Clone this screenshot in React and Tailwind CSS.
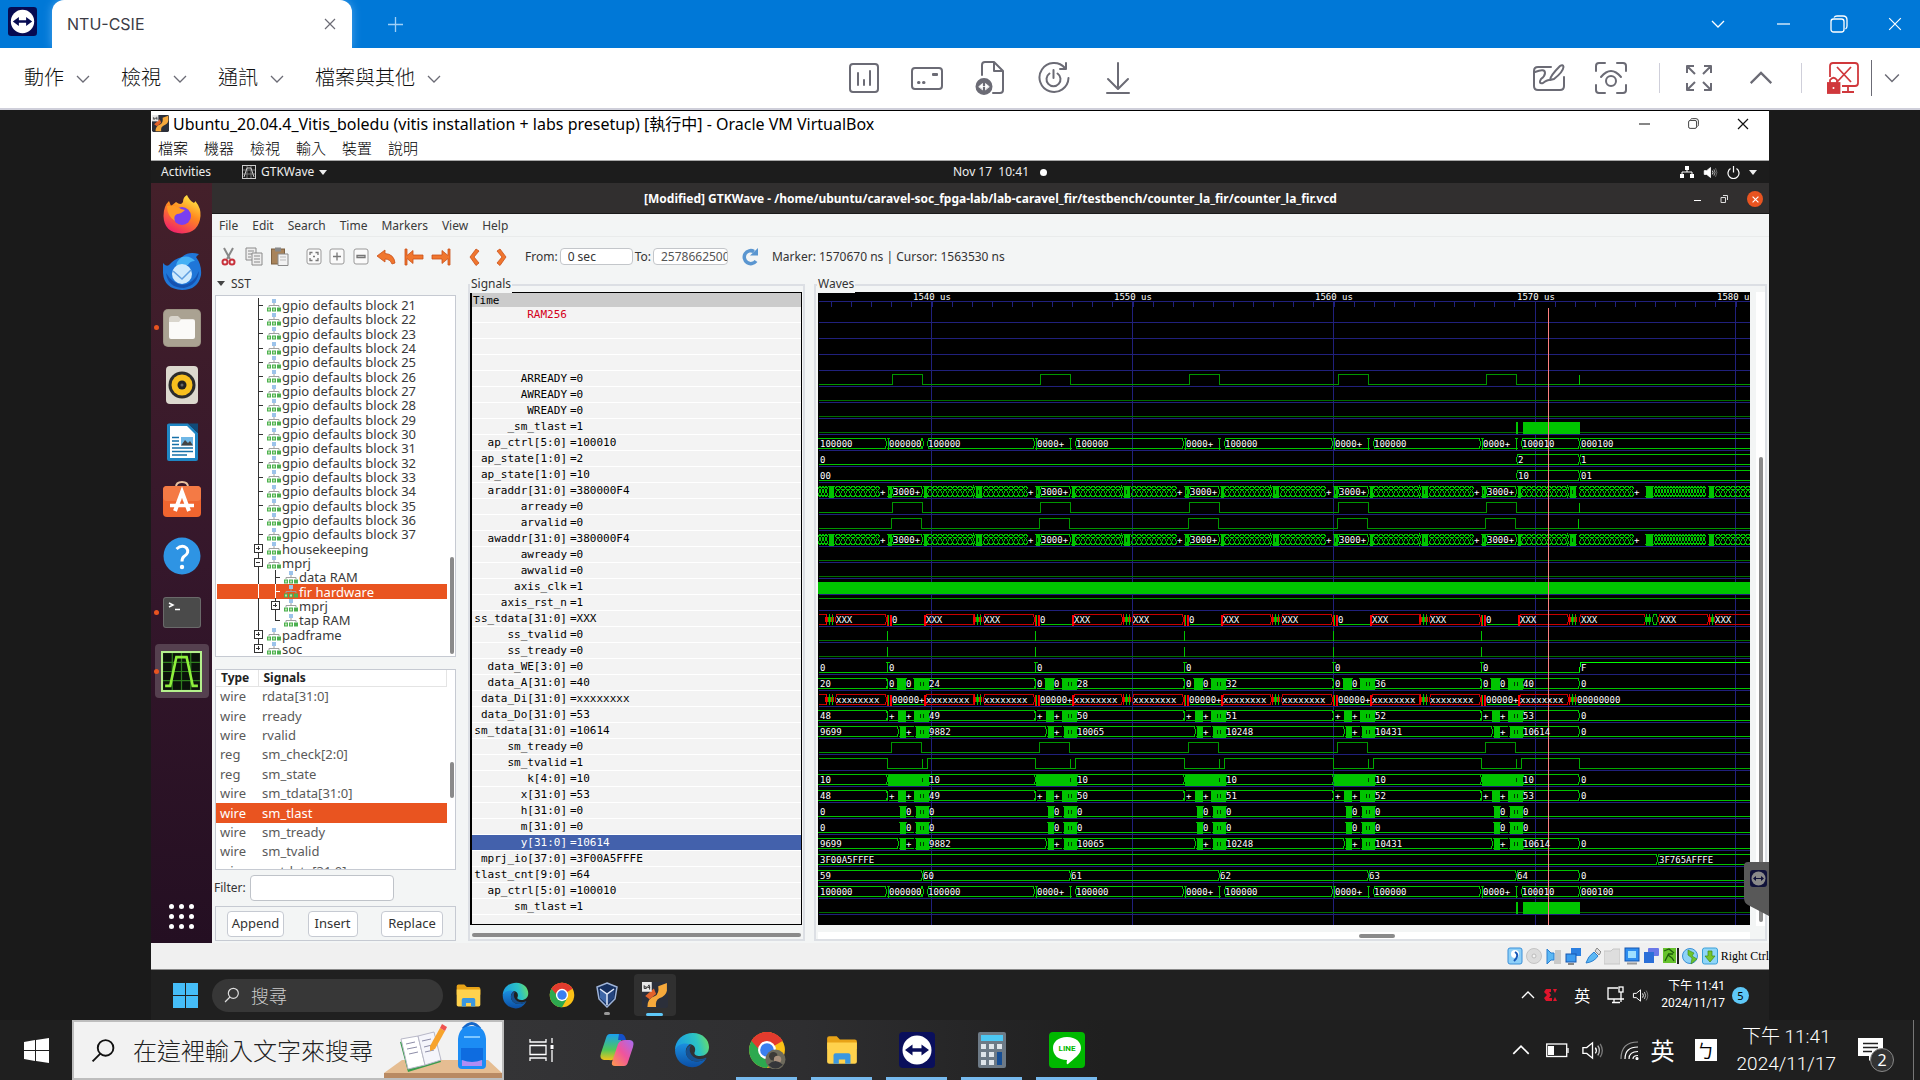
import React from "react";

const UI = "font-['Noto_Sans','Noto_Sans_CJK_TC',sans-serif]";

/* ---------- small shared glyphs ---------- */
const Chev = ({ up, c = "#6b6b75", w = 14 }) => (
  <svg width={w} height={w} viewBox="0 0 14 14" fill="none" stroke={c} strokeWidth="1.3">
    <path d={up ? "M1 10 L7 4 L13 10" : "M1 4 L7 10 L13 4"} />
  </svg>
);
const Cross = ({ c = "#6b6b75", w = 12, s = 1.2 }) => (
  <svg width={w} height={w} viewBox="0 0 12 12" fill="none" stroke={c} strokeWidth={s}>
    <path d="M1 1 L11 11 M11 1 L1 11" />
  </svg>
);
const Dash = ({ c = "#fff", w = 13 }) => (
  <svg width={w} height="12" viewBox="0 0 13 12" stroke={c} strokeWidth="1.2"><path d="M0 6 H13" /></svg>
);
const Restore = ({ c = "#fff", w = 18 }) => (
  <svg width={w} height={w} viewBox="0 0 18 18" fill="none" stroke={c} strokeWidth="1.3">
    <rect x="1" y="4" width="13" height="13" rx="2.5" />
    <path d="M4 2.5 Q5 1 7 1 H13 Q17 1 17 5 V11 Q17 13 15.5 14" />
  </svg>
);
const TeamViewer = ({ w, bg = "#0a0f5c", fg = "#fff" }) => (
  <svg width={w} height={w} viewBox="0 0 36 36">
    <rect width="36" height="36" rx="4" fill={bg} />
    <circle cx="18" cy="18" r="14.5" fill={fg} />
    <path d="M6 18 L13.5 12.5 V16.3 H22.5 V12.5 L30 18 L22.5 23.5 V19.7 H13.5 V23.5 Z" fill={bg} />
  </svg>
);
const Folder = ({ w }) => (
  <svg width={w} height={w} viewBox="0 0 32 32">
    <path d="M2 5 Q2 3 4 3 H11 L14 6 H28 Q30 6 30 8 V15 H2 Z" fill="#e8a317" />
    <path d="M2 9 H30 V27 Q30 29 28 29 H4 Q2 29 2 27 Z" fill="#ffd24d" />
    <path d="M8 29 V21 Q8 19 10 19 H22 Q24 19 24 21 V29 H19 V25 H13 V29 Z" fill="#3a97e0" />
  </svg>
);
const Edge = ({ w }) => (
  <svg width={w} height={w} viewBox="0 0 36 36">
    <defs>
      <linearGradient id="eg1" x1="0" x2="1" y1="0.3" y2="0.1"><stop offset="0" stopColor="#1b9de2" /><stop offset="0.6" stopColor="#2cc3c4" /><stop offset="1" stopColor="#6fdf62" /></linearGradient>
      <linearGradient id="eg2" x1="0" x2="0" y1="0" y2="1"><stop offset="0" stopColor="#1b8fe0" /><stop offset="1" stopColor="#0c4fa5" /></linearGradient>
    </defs>
    <path d="M1 18 C1 8 9 1 19 1 C29 1 35 8 35 15 C35 21 31 24 26 24 C22 24 20 22.5 20.5 20.5 C22 18 21.5 12.5 15.5 12 C9 11.5 3 15 1 18 Z" fill="url(#eg1)" />
    <path d="M1 18 C3 12 11 10 16 12.5 C12 14 11 19 12.5 23 C15 29.5 23 31.5 32 27 C28 33 23 35.5 18 35.2 C8 34.5 1 27.5 1 18 Z" fill="url(#eg2)" />
    <path d="M12.5 23 C15 29.5 23 31.5 32 27 C33 26 32 25.3 31 26 C26 28.5 19 26.5 16.5 21 C15 17.5 16 14 17.5 13 C13 13.5 11 18.5 12.5 23 Z" fill="#17508f" />
  </svg>
);
const Chrome = ({ w, avatar }) => (
  <svg width={w} height={w} viewBox="0 0 36 36">
    <circle cx="18" cy="18" r="17" fill="#fbc116" />
    <path d="M18 18 L3.3 9.5 A17 17 0 0 1 32.7 9.5 Z" fill="#e33b2e" />
    <path d="M18 18 L3.3 9.5 A17 17 0 0 0 18 35 L25.4 22 Z" fill="#2da94f" />
    <path d="M3.3 9.5 H18 V18 L10.6 22 Z" fill="#2da94f" />
    <path d="M3.3 9.5 A17 17 0 0 1 32.7 9.5 H18 L10 17 Z" fill="#e33b2e" />
    <circle cx="18" cy="18" r="8.5" fill="#fff" />
    <circle cx="18" cy="18" r="6.5" fill="#3a7ff0" />
    {avatar && (
      <g>
        <circle cx="26" cy="27" r="9.5" fill="#6d6a5c" />
        <circle cx="24" cy="24" r="4" fill="#3d3a38" />
        <circle cx="28" cy="27" r="3.5" fill="#a8907e" />
        <path d="M19 32 Q26 25 33 32 Q26 39 19 32 Z" fill="#35363a" />
      </g>
    )}
  </svg>
);
const Vitis = ({ w }) => (
  <svg width={w} height={w} viewBox="0 0 24 24">
    <rect width="24" height="24" rx="2" fill="#2b2f3a" />
    <path d="M5 23 Q5 15 12 13 Q16 11 15 4 L23 1 V8 Q22 13 16 15 Q12 17 13 23 Z" fill="#f6a93b" />
    <path d="M3 13 L11 6 L13 11 L7 16 Z" fill="#e2622a" />
    <rect x="0" y="0" width="9" height="9" fill="#e8e8e8" />
    <path d="M2 3 V6 H4 V4.5 H2 M6.5 2.5 L5 5 H7.5 M7 3 V7" stroke="#333" strokeWidth="0.9" fill="none" />
  </svg>
);
const Speaker = ({ w, c = "#fff", fill = "none" }) => (
  <svg width={w} height={w} viewBox="0 0 24 24" fill="none" stroke={c} strokeWidth="1.4">
    <path d="M2 9 H6 L12 4 V20 L6 15 H2 Z" fill={fill} />
    <path d="M15 9 Q17 12 15 15" /><path d="M17.5 7 Q21 12 17.5 17" opacity="0.7" /><path d="M20 5 Q24.5 12 20 19" opacity="0.4" />
  </svg>
);
const Search = ({ w, c }) => (
  <svg width={w} height={w} viewBox="0 0 24 24" fill="none" stroke={c} strokeWidth="1.8">
    <circle cx="14" cy="9.5" r="7.5" /><path d="M9 15 L1.5 22.5" />
  </svg>
);

/* ---------- TeamViewer window chrome ---------- */
function TitleBar() {
  return (
    <header className="flex h-12 items-stretch bg-[#0078d7]">
      <div className="w-[52px] pl-2 pt-[7px]"><TeamViewer w={29} bg="#060b52" /></div>
      <div className="flex w-[300px] items-center justify-between rounded-t-xl bg-white pl-[15px] pr-4 shadow-[0_0_10px_#4aa3ec]">
        <span className="font-['Inter',sans-serif] text-base text-[#3c3c46]">NTU-CSIE</span>
        <button aria-label="Close tab"><Cross /></button>
      </div>
      <button aria-label="New tab" className="ml-9 flex items-center">
        <svg width="15" height="15" viewBox="0 0 15 15" stroke="#9fd0f7" strokeWidth="1.3"><path d="M0 7.5 H15 M7.5 0 V15" /></svg>
      </button>
      <div className="ml-auto flex items-center">
        <button aria-label="More" className="mr-[52px]"><Chev c="#fff" w={14} /></button>
        <button aria-label="Minimize" className="mr-10"><Dash /></button>
        <button aria-label="Restore" className="mr-10"><Restore /></button>
        <button aria-label="Close" className="mr-[18px]"><Cross c="#fff" w={14} s={1} /></button>
      </div>
    </header>
  );
}

function TvToolbar() {
  const g = { fill: "none", stroke: "#6b6b75", strokeWidth: 2, strokeLinecap: "round", strokeLinejoin: "round" };
  return (
    <div className="relative flex h-[62px] items-center border-b-2 border-[#cfcfda] bg-white pl-6 pr-5">
      <nav className="-mt-[2px] flex gap-[31px] font-['Noto_Sans_CJK_TC',sans-serif] text-xl font-light text-[#111]">
        {["動作", "檢視", "通訊", "檔案與其他"].map((t) => (
          <button key={t} className="flex items-center gap-3">{t}<span className="pt-1"><Chev /></span></button>
        ))}
      </nav>
      <div className="ml-[407px] flex items-center gap-[31px]">
        <button aria-label="Statistics"><svg width="32" height="32" viewBox="0 0 32 32" {...g}><rect x="2" y="2" width="28" height="28" rx="3" /><path d="M10 11 V23 M16 18 V23 M22 9 V23" /></svg></button>
        <button aria-label="Input"><svg width="32" height="32" viewBox="0 0 32 32" {...g}><rect x="1" y="6" width="30" height="21" rx="3" /><path d="M22 12 H26 V13 H22 Z" /><path d="M7.5 20.5 H8 M12.5 20.5 H13" strokeWidth="3" /></svg></button>
        <button aria-label="Remote file"><svg width="32" height="34" viewBox="0 0 32 34" {...g}><path d="M8 14 V4 Q8 1 11 1 H20 L29 10 V29 Q29 32 26 32 H19 M20 1 V10 H29" /><circle cx="10" cy="25.5" r="7.5" fill="#6b6b75" /><path d="M5 25.5 L8.5 22.5 V28.5 Z M15 25.5 L11.5 22.5 V28.5 Z M8 25.5 H12" stroke="#fff" strokeWidth="0.8" fill="#fff" /></svg></button>
        <button aria-label="Restart"><svg width="34" height="34" viewBox="0 0 34 34" {...g}><path d="M28 7 A14.5 14.5 0 1 0 31.5 17" /><path d="M29 2 V8 H23" /><path d="M12.5 12.5 A7 7 0 1 0 20.5 12.5 M16.5 9 V17" /></svg></button>
        <button aria-label="Download"><svg width="32" height="34" viewBox="0 0 32 34" {...g}><path d="M16 2 V27 M6 18 L16 28 L26 18 M5 32 H27" /></svg></button>
      </div>
      <div className="ml-auto flex items-center">
        <button aria-label="Whiteboard" className="mr-[29px]"><svg width="32" height="30" viewBox="0 0 32 30" {...g}><path d="M18 4 H5 Q1 4 1 8 V23 Q1 27 5 27 H27 Q31 27 31 23 V14" /><path d="M2 9 Q12 5 12 10 Q12 13 8 16 Q5 21 10 20 Q14 17 16 17" /><path d="M17 17 Q17 13 27 3 Q30 1 30.5 4 Q30 9 21 16 Z" /></svg></button>
        <button aria-label="Screenshot" className="mr-[31px]"><svg width="34" height="34" viewBox="0 0 34 34" {...g}><path d="M2 10 V5 Q2 2 5 2 H11 M23 2 H29 Q32 2 32 5 V10 M32 24 V29 Q32 32 29 32 H23 M11 32 H5 Q2 32 2 29 V24" /><path d="M7 16 Q17 4 27 16" /><circle cx="17" cy="20" r="5" /></svg></button>
        <span className="mr-[25px] h-[30px] w-px bg-[#cfcfda]" />
        <button aria-label="Full screen" className="mr-9"><svg width="28" height="28" viewBox="0 0 28 28" {...g} strokeLinecap="butt"><path d="M2 9 V2 H9 M2 2 L10 10 M19 2 H26 V9 M26 2 L18 10 M26 19 V26 H19 M26 26 L18 18 M9 26 H2 V19 M2 26 L10 18" /></svg></button>
        <button aria-label="Collapse" className="mr-7"><Chev up w={24} /></button>
        <span className="mr-[25px] h-[30px] w-px bg-[#cfcfda]" />
        <button aria-label="Disconnect" className="mr-3"><svg width="32" height="32" viewBox="0 0 32 32" fill="none" stroke="#d0383c" strokeWidth="1.8"><path d="M3 15 V4 Q3 1 6 1 H28 Q31 1 31 4 V21 Q31 24 28 24 H15 M10 5 L24 20 M24 5 L10 20 M21 24 V30 M15 30 H27" /><rect x="0.5" y="21" width="12" height="10" fill="#d0383c" /><path d="M3 21 V18 Q6.5 13.5 10 18 V21" /><circle cx="6.5" cy="26" r="1" fill="#fff" stroke="none" /></svg></button>
        <span className="mr-3 h-9 w-px bg-[#6b6b75]" />
        <button aria-label="More options"><Chev w={16} /></button>
      </div>
    </div>
  );
}

/* ---------- Dock ---------- */
const dock = [
  ["Firefox", <svg width="38" height="40" viewBox="0 0 38 40"><defs><linearGradient id="ff" x1="0.8" x2="0.3" y1="0" y2="1"><stop offset="0" stopColor="#fff04a" /><stop offset="0.45" stopColor="#ff8a1f" /><stop offset="1" stopColor="#f0206a" /></linearGradient></defs><path d="M24 1 Q26 6 31 9 Q33 6 33 8 Q38 14 37.5 22 Q36 39 19 39.5 Q1 39 0.5 22 Q0.5 12 6 7 L8 12 L13 8 Q18 12 20 8 Q20 3 24 1 Z" fill="url(#ff)" /><circle cx="19" cy="22" r="9" fill="#7a3ff0" /><path d="M4 12 Q12 10 18 15 L22 16 Q18 20 14 20 Q10 22 12 27 Q4 22 4 12 Z" fill="#ff9a26" /></svg>],
  ["Thunderbird", <svg width="40" height="40" viewBox="0 0 40 40"><path d="M20 6 Q26 0 37 3 L34 6 Q40 14 39 24 Q36 39 20 39 Q2 38 1 22 L1 12 Q4 16 7 14 Q12 8 20 6 Z" fill="#1f76d8" /><path d="M20 6 Q28 4 33 10 Q28 10 26 14 L14 16 Q14 10 20 6 Z" fill="#45b1f5" /><circle cx="20" cy="23" r="10" fill="#cfeafd" /><path d="M11 20 L20 28 L29 19" stroke="#5f9fe0" strokeWidth="1.5" fill="none" /><path d="M4 22 Q6 37 22 37 Q36 34 37 20 Q32 33 20 34 Q10 32 4 22 Z" fill="#1552b0" /></svg>],
  ["Files", <svg width="38" height="38" viewBox="0 0 38 38"><rect width="38" height="38" rx="5" fill="#9c9484" /><rect x="1" y="1" width="36" height="36" rx="4" fill="#aaa292" /><path d="M6 10 Q6 7 9 7 H15 L18 10 H30 Q32 10 32 12 V15 H6 Z" fill="#d9d5cc" /><path d="M6 13 H16 L18 10.5 H30 Q32 10.5 32 13 V28 Q32 30 30 30 H8 Q6 30 6 28 Z" fill="#fbfaf8" /></svg>],
  ["Rhythmbox", <svg width="38" height="38" viewBox="0 0 38 38"><rect x="3" width="32" height="38" rx="4" fill="#dcd8ce" /><circle cx="19" cy="19" r="13.5" fill="#2c2c2c" /><circle cx="19" cy="19" r="10.5" fill="#f8c01e" /><circle cx="19" cy="19" r="4.5" fill="#222" /><circle cx="19" cy="19" r="1.5" fill="#666" /></svg>],
  ["Writer", <svg width="38" height="38" viewBox="0 0 38 38"><path d="M4 2 Q4 0.5 6 0.5 H25 L35 10 V36 Q35 38 33 38 H6 Q4 38 4 36 Z" fill="#1f86c4" /><path d="M25 0.5 H35 V10 Z" fill="#104a78" /><path d="M7 3 H24 L32 11 V35 H7 Z" fill="#fff" /><path d="M9 14.5 H16 M9 18 H16 M9 21.5 H16 M9 25 H30 M9 28.5 H30 M9 32 H24" stroke="#1670a8" strokeWidth="1.6" /><rect x="18" y="14" width="12" height="8.5" fill="#6fb7e6" /><path d="M18 22.5 L22 17 L25 20 L27 18 L30 22.5 Z" fill="#444" /></svg>],
  ["Software", <svg width="38" height="38" viewBox="0 0 38 38"><path d="M13 7 Q13 2 19 2 Q25 2 25 7" stroke="#e9c2a0" strokeWidth="2" fill="none" /><rect y="6" width="38" height="31" rx="4" fill="#f0652f" /><rect y="6" width="38" height="15" rx="4" fill="#f47a45" /><path d="M12 31 L19 12 L26 31" stroke="#fff" strokeWidth="4" fill="none" /><path d="M7 25.5 H31" stroke="#fff" strokeWidth="3.5" /></svg>],
  ["Help", <svg width="38" height="38" viewBox="0 0 38 38"><circle cx="19" cy="19" r="18.5" fill="#2e94e4" /><path d="M13.5 12 Q19 7 23.5 11 Q27 15.5 21 19.5 Q19 21 19 24.5" stroke="#fff" strokeWidth="3" fill="none" /><circle cx="19" cy="30" r="2.2" fill="#fff" /></svg>],
  ["Terminal", <svg width="38" height="32" viewBox="0 0 38 32"><rect width="38" height="31" rx="3" fill="#6a6a6a" /><rect x="1" y="1" width="36" height="29" rx="2" fill="#4a4a4a" /><path d="M6 6 L10 8 L6 10" stroke="#fff" strokeWidth="1.5" fill="none" /><path d="M12 12.5 H17" stroke="#fff" strokeWidth="1.5" /></svg>],
];
const WaveIcon = ({ w }) => (
  <svg width={w} height={w} viewBox="0 0 40 40">
    <rect width="40" height="40" fill="#b4f08c" /><rect x="2" y="2" width="36" height="36" fill="#0a120a" />
    <path d="M2 11 H38 M2 20 H38 M2 29 H38 M11 2 V38 M20 2 V38 M29 2 V38" stroke="#2e7d1e" strokeWidth="1.2" />
    <path d="M4 34 H9 L15 6 H25 L31 34 H36" stroke="#8ef03c" strokeWidth="2.5" fill="none" />
  </svg>
);
function Dock() {
  return (
    <aside className="flex w-[61px] shrink-0 flex-col items-center bg-gradient-to-b from-[#44202a] via-[#35172b] to-[#240f22] pt-[2px]">
      {dock.map(([n, ic]) => (
        <button key={n} aria-label={n} className="relative flex h-[57px] w-full items-center justify-center">
          {(n === "Files" || n === "Terminal") && <i className="absolute left-[3px] size-[5px] rounded-full bg-[#e95420]" />}
          {ic}
        </button>
      ))}
      <button aria-label="GTKWave" className="relative flex h-[60px] w-full items-center justify-center">
        <span className="flex size-[54px] items-center justify-center rounded bg-[#55404f]"><WaveIcon w={41} /></span>
        <i className="absolute left-[3px] size-[5px] rounded-full bg-[#e95420]" />
      </button>
      <button aria-label="Show Applications" className="mb-[14px] mt-auto grid grid-cols-3 gap-[5px]">
        {Array.from({ length: 9 }, (_, i) => <i key={i} className="size-[5px] rounded-sm bg-white" />)}
      </button>
    </aside>
  );
}

/* ---------- SST tree ---------- */
const TreeIcon = () => (
  <svg width="14" height="13" viewBox="0 0 14 13" className="shrink-0">
    <rect x="5" y="0" width="4" height="4" fill="#9cc3ea" /><path d="M7 4 V6 M2 8 V6.5 H12 V8" stroke="#a0a0a0" fill="none" />
    <rect x="0.5" y="9" width="3" height="3" fill="#b5e3a8" stroke="#4caf50" /><rect x="5.5" y="9" width="3" height="3" fill="#b5e3a8" stroke="#4caf50" /><rect x="10.5" y="9" width="3" height="3" fill="#4caf50" stroke="#4caf50" />
  </svg>
);
const tree = [
  ...Array.from({ length: 17 }, (_, i) => ({ t: `gpio defaults block ${21 + i}`, d: 0 })),
  { t: "housekeeping", d: 0, x: "+" }, { t: "mprj", d: 0, x: "-" },
  { t: "data RAM", d: 1 }, { t: "fir hardware", d: 1, sel: true }, { t: "mprj", d: 1, x: "+" }, { t: "tap RAM", d: 1, last: true },
  { t: "padframe", d: 0, x: "+" }, { t: "soc", d: 0, x: "+", last: true },
];
const Branch = ({ n }) => {
  const bx = n.d ? 25 : 8;
  const c = n.sel ? "#fff" : "#333";
  return (
    <svg width={n.d ? 34 : 17} height="15" className="shrink-0" fill="none" stroke={c} shapeRendering="crispEdges">
      {n.d === 1 && <path d="M8 0 V15" />}
      <path d={`M${bx} 0 V${n.last ? 8 : 15} M${bx} 7 H${bx + 5}`} />
      {n.x && <rect x={bx - 4} y="3" width="8" height="8" fill="#fff" />}
      {n.x && <path d={n.x === "+" ? `M${bx - 2} 7 H${bx + 2} M${bx} 5 V9` : `M${bx - 2} 7 H${bx + 2}`} />}
    </svg>
  );
};
const sigs = [["wire", "rdata[31:0]"], ["wire", "rready"], ["wire", "rvalid"], ["reg", "sm_check[2:0]"], ["reg", "sm_state"], ["wire", "sm_tdata[31:0]"], ["wire", "sm_tlast"], ["wire", "sm_tready"], ["wire", "sm_tvalid"], ["wire", "ss_tdata[31:0]"]];

function SstPanel() {
  return (
    <section className="flex w-[246px] shrink-0 flex-col pl-[3px]">
      <h2 className="flex h-[19px] items-center gap-[6px] pl-[2px] text-xs text-[#333]">
        <svg width="8" height="5"><path d="M0 0 H8 L4 5 Z" fill="#444" /></svg>SST
      </h2>
      <div className="mr-[2px] mt-[2px] flex h-[362px] border border-[#c6cad2] bg-white">
        <ul className="ml-px grid w-[230px] auto-rows-fr pt-[2px] text-[13px] leading-[14px] text-[#3a3a3a]">
          {tree.map((n, i) => (
            <li key={i} className={n.sel ? "flex min-h-0 items-center bg-[#e95420] pl-[33px] text-white" : "flex min-h-0 items-center pl-[33px]"}>
              <Branch n={n} /><TreeIcon /><span className="pl-px">{n.t}</span>
            </li>
          ))}
        </ul>
        <i className="mb-[2px] ml-[3px] mt-auto h-[97px] w-1 rounded bg-[#8a8a8a]" />
      </div>
      <div className="mr-[2px] mt-3 flex h-[201px] overflow-hidden border border-[#c6cad2] bg-white">
        <table className="h-[211px] w-[231px] text-left text-[13px] leading-[17px] text-[#5a5a5a]">
          <thead>
            <tr className="border-b border-[#e4e4e4] text-xs text-[#222]"><th className="w-[42px] border-r border-[#e4e4e4] pl-[5px]">Type</th><th className="border-r border-[#e4e4e4] pl-[5px]">Signals</th></tr>
          </thead>
          <tbody>
            {sigs.map(([a, b]) => (
              <tr key={b} className={b === "sm_tlast" ? "bg-[#e95420] text-white" : ""}><td className="pl-1">{a}</td><td className="pl-1">{b}</td></tr>
            ))}
          </tbody>
        </table>
        <i className="ml-[3px] mt-[92px] h-9 w-1 rounded bg-[#8a8a8a]" />
      </div>
      <label className="-ml-px mt-[5px] flex items-center gap-1 text-xs text-[#333]">Filter:
        <input className="h-[26px] w-[144px] rounded border border-[#bfc3c9] bg-white px-2" />
      </label>
      <div className="mr-[2px] mt-[5px] flex h-[35px] items-center justify-between border border-[#c6cad2] pl-[11px] pr-3 text-[13px] text-[#333]">
        <button className="h-[26px] w-[57px] rounded border border-[#c6cad2] bg-white">Append</button>
        <button className="h-[26px] w-[50px] rounded border border-[#c6cad2] bg-white">Insert</button>
        <button className="h-[26px] w-[62px] rounded border border-[#c6cad2] bg-white">Replace</button>
      </div>
    </section>
  );
}

/* ---------- Signal names ---------- */
const names = [
  ["RAM256"], [""], [""], [""], ["ARREADY", "0"], ["AWREADY", "0"], ["WREADY", "0"], ["_sm_tlast", "1"], ["ap_ctrl[5:0]", "100010"], ["ap_state[1:0]", "2"], ["ap_state[1:0]", "10"],
  ["araddr[31:0]", "380000F4"], ["arready", "0"], ["arvalid", "0"], ["awaddr[31:0]", "380000F4"], ["awready", "0"], ["awvalid", "0"], ["axis_clk", "1"], ["axis_rst_n", "1"],
  ["ss_tdata[31:0]", "XXX"], ["ss_tvalid", "0"], ["ss_tready", "0"], ["data_WE[3:0]", "0"], ["data_A[31:0]", "40"], ["data_Di[31:0]", "xxxxxxxx"], ["data_Do[31:0]", "53"], ["sm_tdata[31:0]", "10614"],
  ["sm_tready", "0"], ["sm_tvalid", "1"], ["k[4:0]", "10"], ["x[31:0]", "53"], ["h[31:0]", "0"], ["m[31:0]", "0"], ["y[31:0]", "10614"], ["mprj_io[37:0]", "3F00A5FFFE"], ["tlast_cnt[9:0]", "64"], ["ap_ctrl[5:0]", "100010"], ["sm_tlast", "1"],
];
function SignalsPanel() {
  return (
    <section className="flex w-[337px] shrink-0 flex-col">
      <h2 className="relative z-10 -mb-[9px] ml-[2px] h-[19px] w-fit bg-[#f3f5f5] px-[1px] text-xs leading-[19px] text-[#333]">Signals</h2>
      <div className="flex flex-1 flex-col border-2 border-[#dcdfe4] pt-[6px]">
        <div className="mr-px h-[633px] border border-l-2 border-black bg-[#f3f3f3] font-['DejaVu_Sans_Mono',monospace] text-[11px] leading-[16px] text-black">
          <div className="h-[14px] bg-[#cbcbcb] pl-px">Time</div>
          {names.map(([n, v], i) => (
            <div key={i} className={n === "y[31:0]" ? "flex h-4 border-b border-white bg-[#4361ac] text-white" : i === 0 ? "flex h-4 border-b border-white text-[#d4001a]" : "flex h-4 border-b border-white"}>
              <span className="w-[95px] whitespace-pre text-right">{n}</span>
              <span className="pl-[3px]">{v && "=" + v}</span>
            </div>
          ))}
        </div>
        <i className="mx-[2px] mt-2 h-1 rounded bg-[#8a8a8a]" />
      </div>
    </section>
  );
}

/* ---------- Waveforms ---------- */
const T = [74, 222, 371, 520, 668];
const END = 761;
const FAR = 4000;
const G = "#00c400", D = "#006e00", R = "#c80000";
const rowY = (i) => 30 + 16 * i;

function buildWaves() {
  const shapes = [], texts = [];
  let key = 0;
  const path = (d, c = G) => shapes.push(<path key={key++} d={d} stroke={c} />);
  const txt = (x, b, s) => texts.push(<text key={key++} x={x} y={b - 3}>{s}</text>);
  const bus = (a, z, b, c) => path(`M${a} ${b - 7} L${a + 1} ${b - 12} H${z - 1} L${z} ${b - 7} L${z - 1} ${b - 2} H${a + 1} Z`, c);
  const zero = (a, z, b, c) => path(`M${a} ${b - 2} H${z}`, c);
  const solid = (a, z, b) => {
    shapes.push(<rect key={key++} x={a} y={b - 12} width={z - a} height="11" fill={G} />);
    path(`M${a - 1} ${b - 12} H${z + 1} M${a - 1} ${b - 2} H${z + 1}`);
  };
  const spike = (x, b, c = G) => path(`M${x} ${b - 12} V${b - 2}`, c);
  const dark = (x, b) => path(`M${x} ${b - 9} V${b - 5}`, "#003c00");
  const cells = (a, z, b, step = 5) => {
    for (let x = a; x < z - 1; x += step) {
      const e = Math.min(x + step, z);
      path(`M${x} ${b - 10} L${x + 1} ${b - 12} H${e - 1} L${e} ${b - 10} L${x + 1} ${b - 7} L${x} ${b - 4} L${x + 1} ${b - 2} H${e - 1} L${e} ${b - 4} L${e - 1} ${b - 7} L${x} ${b - 10}`);
    }
  };
  const glitch = (a, b, red, n = 3) => {
    for (let i = 0; i < n; i++) {
      bus(a + i * 3, a + i * 3 + 2, b, red && i % 2 === 0 ? "#f00000" : G);
      spike(a + i * 3 + 1, b, red && i === 0 ? "#f00000" : G);
    }
  };
  const redBar = (x, b) => shapes.push(<rect key={key++} x={x} y={b - 12} width="2" height="11" fill="#ff0000" />);

  const pulse = (b, off = 0) => {
    let d = `M0 ${b - 2}`;
    T.forEach((t) => { d += ` H${t + off} V${b - 12} H${t + off + 30} V${b - 2}`; });
    path(d + ` H${FAR}`, "#009600");
  };
  const tlast = (b) => { zero(0, FAR, b, D); shapes.push(<rect key={key++} x="697" y={b - 13} width="2" height="12" fill={G} />); shapes.push(<rect key={key++} x="704" y={b - 13} width={END - 704} height="12" fill={G} />); };
  const ctrl = (b) => {
    bus(-2, 68, b); txt(2, b, "100000");
    T.forEach((t, n) => {
      solid(t - 5, t - 4, b);
      zero(t - 3, t + 30, b); txt(t - 3, b, n ? "0000+" : "000000");
      if (n) solid(t + 29, t + 30, b); else bus(t + 28, t + 31, b);
      bus(t + 35, n < 4 ? T[n + 1] - 6 : END, b);
      txt(t + 36, b, n < 4 ? "100000" : "100010");
    });
    bus(END, FAR, b); txt(END + 2, b, "000100");
  };
  const addr = (b) => {
    cells(0, 9, b, 3); solid(10, 15, b); cells(17, 61, b);
    T.forEach((t, n) => {
      txt(t - 12, b, "+"); solid(t - 5, t - 1, b); dark(t - 3, b);
      bus(t, t + 30, b); txt(t + 1, b, "3000+");
      solid(t + 31, t + 34, b); cells(t + 35, t + 82, b); solid(t + 83, t + 89, b); dark(t + 86, b);
      if (n < 4) cells(t + 91, T[n + 1] - 13, b);
    });
    cells(761, 815, b); txt(816, b, "+"); solid(827, 834, b); cells(836, 888, b, 3); solid(890, 895, b); cells(897, 1500, b);
  };
  const redRow = (b, xs, zs, last) => {
    path(`M0 ${b - 12} H7 M0 ${b - 2} H7`, R);
    T.forEach((t, n) => {
      bus(t - 57, t - 6, b, R); glitch(t - 67, b, true); txt(t - 56, b, xs);
      redBar(t - 6, b); spike(t - 4, b); redBar(t - 3, b);
      zero(t, t + 31, b); txt(t, b, zs);
      bus(t + 33, t + 82, b, R); redBar(t + 31, b); txt(t + 34, b, xs);
    });
    glitch(750, b, true);
    last(b);
  };
  const value = (b, first, vals, o) => {
    const lo = o.zero ? zero : bus;
    lo(-2, T[0] + o.start, b); txt(2, b, first);
    T.forEach((t, n) => {
      if (o.first) { spike(t - 5, b); txt(t - 3, b, o.first); zero(t - 4, t + 4, b); if (o.first === "+") path(`M${t - 4} ${b - 12} H${t + 4}`); }
      if (o.full) { solid(t - 5, t + 36, b); dark(t + 30, b); }
      else {
        solid(t + o.s1, t + 13, b); txt(t + 14, b, o.mid); zero(t + 13, t + 21, b);
        if (o.mid === "+") path(`M${t + 13} ${b - 12} H${t + 21}`);
        solid(t + o.s2, t + 36, b); dark(t + 28, b); dark(t + 31, b);
      }
      lo(t + 36, n < 4 ? T[n + 1] + o.start : o.zero ? FAR : END, b);
      txt(t + 37, b, vals[n]);
    });
    if (!o.zero) { zero(END, FAR, b); txt(END + 2, b, "0"); }
  };
  const B = rowY;
  pulse(B(4)); spike(END, B(4));
  zero(0, FAR, B(5), D); zero(0, FAR, B(6), D);
  tlast(B(7)); ctrl(B(8));
  [[9, "0", "2", "1"], [10, "00", "10", "01"]].forEach(([i, a, c, d]) => {
    zero(0, 698, B(i)); bus(698, END, B(i)); bus(END, FAR, B(i)); txt(2, B(i), a); txt(700, B(i), c); txt(763, B(i), d);
  });
  addr(B(11)); pulse(B(12)); spike(END, B(12)); pulse(B(13), -1); spike(END - 1, B(13)); addr(B(14));
  zero(0, FAR, B(15), D); zero(0, FAR, B(16), D);
  shapes.push(<rect key={key++} x="-1" y={B(17) - 13} width={FAR} height="12" fill={G} />);
  path(`M0 ${B(18) - 12} H${FAR}`, "#009600");
  redRow(B(19), "XXX", "0", (b) => {
    bus(761, 827, b, R); txt(763, b, "XXX"); glitch(827, b, false, 2); bus(834, 839, b); bus(840, 890, b, R); txt(842, b, "XXX"); glitch(890, b, true, 2); bus(896, FAR, b, R); txt(897, b, "XXX");
  });
  [20, 21].forEach((i) => { zero(0, FAR, B(i), D); T.forEach((t) => spike(t - 5, B(i))); });
  zero(0, END, B(22)); txt(2, B(22), "0");
  T.forEach((t) => { spike(t - 5, B(22)); path(`M${t - 7} ${B(22) - 12} H${t - 3}`); txt(t - 3, B(22), "0"); });
  path(`M${END} ${B(22) - 2} L${END + 1} ${B(22) - 12} H${FAR}`, "#00ff00"); txt(END + 2, B(22), "F");
  value(B(23), "20", ["24", "28", "32", "36", "40"], { start: -5, first: "0", s1: 4, s2: 21, mid: "0" });
  redRow(B(24), "xxxxxxxx", "00000+", (b) => { zero(759, FAR, b); txt(759, b, "00000000"); });
  value(B(25), "48", ["49", "50", "51", "52", "53"], { start: -5, first: "+", s1: 5, s2: 21, mid: "+" });
  const tot = ["9882", "10065", "10248", "10431", "10614"];
  value(B(26), "9699", tot, { start: 6, s1: 7, s2: 23, mid: "+" });
  pulse(B(27), -1);
  const b28 = B(28);
  path("M0 " + (b28 - 12) + T.map((t) => ` H${t - 5} V${b28 - 2} H${t + 30} V${b28 - 12} V${b28 - 2} H${t + 35} V${b28 - 12}`).join("") + ` H${END} V${b28 - 2} H${FAR}`, "#00a800");
  value(B(29), "10", ["10", "10", "10", "10", "10"], { start: -5, full: true });
  value(B(30), "48", ["49", "50", "51", "52", "53"], { start: -5, first: "+", s1: 5, s2: 21, mid: "+" });
  [31, 32].forEach((i) => value(B(i), "0", ["0", "0", "0", "0", "0"], { zero: true, start: 6, s1: 7, s2: 23, mid: "0" }));
  value(B(33), "9699", tot, { start: 6, s1: 7, s2: 23, mid: "+" });
  bus(-2, 839, B(34)); bus(839, FAR, B(34)); txt(2, B(34), "3F00A5FFFE"); txt(841, B(34), "3F765AFFFE");
  bus(-2, 104, B(35)); txt(2, B(35), "59");
  T.forEach((t, n) => { bus(t + 30, n < 4 ? T[n + 1] + 30 : END, B(35)); txt(t + 31, B(35), String(60 + n)); });
  zero(END, FAR, B(35)); txt(END + 2, B(35), "0");
  ctrl(B(36)); tlast(B(37));
  return { shapes, texts };
}
const waves = buildWaves();
const gridX = [113, 314, 515, 717, 917];

function WavesPanel() {
  return (
    <section className="flex min-w-0 flex-1 flex-col pr-[2px]">
      <h2 className="relative z-10 -mb-[9px] ml-[3px] h-[19px] w-fit bg-[#f3f5f5] px-[1px] text-xs leading-[19px] text-[#333]">Waves</h2>
      <div className="grid flex-1 grid-cols-[minmax(0,1fr)_15px] border-2 border-[#dcdfe4] pl-[2px] pt-[6px]">
        <div className="h-[633px] overflow-hidden bg-black">
          <svg className="block h-full w-full" shapeRendering="crispEdges" role="img" aria-label="Waveforms">
            <g fill="none" transform="translate(0.5 0.5)">
              <g stroke="#20207c">
                <path d="M0 9 H4000" />
                {Array.from({ length: 38 }, (_, i) => <path key={i} d={`M0 ${rowY(i)} H4000`} />)}
                {gridX.map((x) => <path key={x} d={`M${x} 9 V640`} />)}
                {Array.from({ length: 46 }, (_, i) => <path key={i} d={`M${13 + Math.round(i * 20.1)} 9 V14`} />)}
              </g>
              {waves.shapes}
              <path d="M730 15 V640" stroke="#ff8080" />
            </g>
            <g fill="#fff" className="font-['DejaVu_Sans_Mono',monospace] text-[9px]">
              {gridX.map((x, i) => <text key={x} x={x - 18} y="8">{`${1540 + i * 10} us`}</text>)}
              {waves.texts}
            </g>
          </svg>
        </div>
        <div className="ml-[6px] bg-white pt-[165px]"><i className="mx-auto block h-[465px] w-1 rounded bg-[#8a8a8a]" /></div>
        <div className="mt-[6px] h-[7px] bg-white"><i className="ml-[58%] mt-[2px] block h-1 w-9 rounded bg-[#8a8a8a]" /></div>
      </div>
    </section>
  );
}

/* ---------- GTKWave window ---------- */
const Arrow = ({ d }) => (
  <svg width="20" height="18" viewBox="0 0 20 18"><path d={d} fill="#f0762e" stroke="#c9501a" strokeWidth="0.8" strokeLinejoin="round" /></svg>
);
const ZoomBtn = ({ d }) => (
  <svg width="16" height="18" viewBox="0 0 16 18" fill="none"><rect x="1" y="1" width="14" height="15" rx="2" fill="#fafafa" stroke="#999" /><path d={d} stroke="#777" strokeWidth="1.3" /></svg>
);
const Sep = () => <i className="h-[18px] w-px bg-[#e2e4e6]" />;

function GtkWave() {
  return (
    <div className="flex min-w-0 flex-1 flex-col bg-[#f3f5f5]">
      <div className="grid h-[31px] grid-cols-[1fr_auto_1fr] items-center border-b border-[#1a1a1a] bg-[#312f2f] pt-[2px] text-white">
        <span />
        <h1 className="text-xs font-bold">[Modified] GTKWave - /home/ubuntu/caravel-soc_fpga-lab/lab-caravel_fir/testbench/counter_la_fir/counter_la_fir.vcd</h1>
        <div className="flex items-center justify-end gap-[18px] pr-[6px]">
          <button aria-label="Minimize window"><svg width="8" height="10"><path d="M0 6.5 H7" stroke="#fff" /></svg></button>
          <button aria-label="Restore window"><svg width="9" height="10" fill="none" stroke="#ddd"><path d="M1 3.5 H5.5 V8.5 H1 Z M3 1.5 H7.5 V6" /></svg></button>
          <button aria-label="Close window" className="flex size-4 items-center justify-center rounded-full bg-[#e95420]"><Cross c="#fff" w={7} s={2} /></button>
        </div>
      </div>
      <nav className="flex h-[23px] items-center gap-[14px] border-b border-[#e9ebeb] pl-[7px] pt-[2px] text-xs text-[#3a3a3a]">
        {["File", "Edit", "Search", "Time", "Markers", "View", "Help"].map((m) => <button key={m}>{m}</button>)}
      </nav>
      <div className="flex h-[37px] items-center pt-[2px] text-xs text-[#333]">
        <div className="flex w-[77px] items-center justify-between pl-[9px]">
          <button aria-label="Cut"><svg width="15" height="19" viewBox="0 0 15 19" fill="none"><path d="M3 1 L9 12 M12 1 L6 12" stroke="#888" strokeWidth="2" /><circle cx="4" cy="15" r="2.5" stroke="#c8323c" strokeWidth="2" /><circle cx="11" cy="15" r="2.5" stroke="#c8323c" strokeWidth="2" /></svg></button>
          <button aria-label="Copy"><svg width="18" height="19" viewBox="0 0 18 19" fill="#eee" stroke="#8a8a8a"><path d="M1 1 H11 V13 H1 Z M3 4 H9 M3 7 H9 M3 10 H6" /><path d="M7 6 H17 V18 H7 Z M9 9 H15 M9 12 H15 M9 15 H15" /></svg></button>
          <button aria-label="Paste"><svg width="18" height="19" viewBox="0 0 18 19"><rect x="0.5" y="2" width="13" height="15" fill="#a8835a" stroke="#7d6040" /><rect x="4" y="0.5" width="6" height="4" fill="#888" /><path d="M7 7 H17 V18.5 H7 Z" fill="#f2f2f2" stroke="#8a8a8a" /><path d="M9 10 H15 M9 13 H15" stroke="#bbb" /></svg></button>
        </div>
        <div className="flex w-[162px] items-center justify-between pl-[17px]">
          <button aria-label="Zoom fit"><ZoomBtn d="M4 7 V4.5 H6.5 M9.5 4.5 H12 V7 M12 10 V12.5 H9.5 M6.5 12.5 H4 V10 M7 8.5 H9" /></button>
          <button aria-label="Zoom in"><ZoomBtn d="M8 4.5 V12.5 M4 8.5 H12" /></button>
          <button aria-label="Zoom out"><ZoomBtn d="M4 7.5 H12 V9.5 H4 Z" /></button>
          <button aria-label="Undo zoom"><Arrow d="M1 8 L9 2 V5.5 Q18 6 19 15 L16 16 Q14 11 9 11 V14 Z" /></button>
          <button aria-label="Zoom to start"><Arrow d="M1 1 H3 V7.5 L9 2.5 V7 H19 V11 H9 V15.5 L3 10.5 V17 H1 Z" /></button>
          <button aria-label="Zoom to end"><Arrow d="M19 1 H17 V7.5 L11 2.5 V7 H1 V11 H11 V15.5 L17 10.5 V17 H19 Z" /></button>
        </div>
        <div className="flex w-[61px] items-center justify-between pl-[14px]">
          <button aria-label="Previous edge"><Arrow d="M11 1 L14 3 L9 9 L14 15 L11 17.5 L5 9 Z" /></button>
          <button aria-label="Next edge"><Arrow d="M8 1 L5 3 L10 9 L5 15 L8 17.5 L14 9 Z" /></button>
        </div>
        <label className="ml-[13px] flex items-center gap-[2px]">From:<input defaultValue="0 sec" className="h-[17px] w-[73px] rounded-sm border border-[#c3c6ca] bg-white pl-[7px]" /></label>
        <label className="ml-[2px] flex items-center gap-[2px]">To:<input defaultValue="2578662500 ns" className="h-[17px] w-[75px] rounded-sm border border-[#c3c6ca] bg-white pl-[7px] pr-0 text-[#555]" /></label>
        <span className="ml-[5px] mr-2"><Sep /></span>
        <button aria-label="Reload"><svg width="18" height="19" viewBox="0 0 18 19" fill="none"><path d="M15 14 A6.5 6.5 0 1 1 13 4.5" stroke="#5a96d0" strokeWidth="3.5" /><path d="M9 8.5 L17 8.5 L17 1 Z" fill="#5a96d0" /></svg></button>
        <span className="ml-2 mr-[5px]"><Sep /></span>
        <output>Marker: 1570670 ns | Cursor: 1563530 ns</output>
      </div>
      <div className="flex flex-1 pb-[2px]">
        <SstPanel />
        <div className="w-[10px]" />
        <SignalsPanel />
        <div className="w-[9px]" />
        <WavesPanel />
      </div>
    </div>
  );
}

/* ---------- Virtual machine window ---------- */
const status = [
  <g key="a"><rect x="1" y="1" width="14" height="16" rx="2" fill="#8fd0f8" stroke="#3a8fd8" /><circle cx="8" cy="7" r="4" fill="#fff" /><path d="M8 5 Q13 8 7 14" stroke="#1658b8" strokeWidth="2" fill="none" /></g>,
  <g key="b"><circle cx="8" cy="9" r="7.5" fill="#dcdcdc" stroke="#c4c4c4" /><circle cx="8" cy="9" r="2" fill="#f4f4f4" stroke="#bbb" /></g>,
  <g key="c"><path d="M1 2 L5 6 H8 V13 H5 L1 17 Z" fill="#5cb8f4" stroke="#2b7fd0" /><path d="M9 3 H15 V17 H8 V13 H9 Z" fill="#c9c9c9" /></g>,
  <g key="d"><rect x="6" y="1" width="10" height="8" fill="#2b7fe0" /><rect x="1" y="7" width="10" height="8" fill="#3d9cf0" stroke="#1656b0" /><path d="M3 17 H9" stroke="#888" strokeWidth="2" /></g>,
  <g key="e"><path d="M1 16 Q3 9 9 5 L13 9 Q9 15 1 16 Z" fill="#5cb8f4" stroke="#2b7fd0" /><path d="M10 4 L12 1 L16 5 L14 8 Z" fill="#ddd" stroke="#888" /></g>,
  <g key="f"><path d="M0 4 H7 L9 2 H16 V17 H0 Z" fill="#dedede" stroke="#c6c6c6" /></g>,
  <g key="g"><rect x="1" y="1" width="14" height="13" fill="#2d8df0" stroke="#1656b0" /><rect x="4" y="4" width="8" height="7" fill="#9ee0ff" /><path d="M3 16.5 H13" stroke="#999" strokeWidth="2" /></g>,
  <g key="h"><rect x="5" y="1" width="11" height="8" rx="1" fill="#6a78e8" /><rect x="1" y="5" width="10" height="11" fill="#2b6fd8" /></g>,
  <g key="i"><rect x="0" y="1" width="13" height="15" fill="#66c22c" /><path d="M1 4 L6 2 L11 6 M2 14 L5 8 L9 11 L11 14 M5 7 H10" stroke="#1e5c0c" strokeWidth="1.3" fill="none" /><rect x="14" y="1" width="2" height="16" fill="#222" /></g>,
  <g key="j"><circle cx="8" cy="9" r="7.5" fill="#8ed2f6" stroke="#3a8fd8" /><path d="M6 3 L12 6 L10 9 L15 12 L9 17 L10 11 L6 8 Z" fill="#6cc52c" stroke="#3d8a12" strokeWidth="0.6" /></g>,
  <g key="k"><rect x="0.5" y="1" width="15" height="16" rx="2" fill="#8fd6f8" stroke="#3a9fd8" /><path d="M6 4 H10 V9 H13 L8 15 L3 9 H6 Z" fill="#78c42c" stroke="#3d8a12" strokeWidth="0.7" /></g>,
];

function VmWindow() {
  return (
    <div className="flex flex-col">
      <div className="flex h-[25px] items-center bg-white pl-[1px]">
        <Vitis w={17} />
        <h1 className="ml-1 font-['Noto_Sans','Noto_Sans_CJK_TC',sans-serif] text-base leading-6 text-black">Ubuntu_20.04.4_Vitis_boledu (vitis installation + labs presetup) [執行中] - Oracle VM VirtualBox</h1>
        <div className="ml-auto flex items-center gap-[38px] pr-5">
          <button aria-label="Minimize VM"><Dash c="#111" w={11} /></button>
          <button aria-label="Restore VM"><Restore c="#111" w={11} /></button>
          <button aria-label="Close VM"><Cross c="#111" w={12} /></button>
        </div>
      </div>
      <nav className="flex h-[25px] items-center gap-4 border-b border-[#a8a8a8] bg-white pl-[7px] font-['Noto_Sans_CJK_TC',sans-serif] text-[15px] font-light leading-6 text-black">
        {["檔案", "機器", "檢視", "輸入", "裝置", "說明"].map((m) => <button key={m}>{m}</button>)}
      </nav>
      <div className="grid h-[22px] grid-cols-[1fr_auto_1fr] items-center bg-[#1c1c1c] text-xs text-[#eee]">
        <div className="flex items-center pl-[10px]">
          <button>Activities</button>
          <button className="ml-[31px] flex items-center gap-[5px]">
            <svg width="14" height="14" viewBox="0 0 14 14" fill="none" stroke="#ccc"><rect x="0.5" y="0.5" width="13" height="13" /><path d="M1 5 H13 M1 9 H13 M5 1 V13 M9 1 V13" stroke="#777" /><path d="M2 12 L5 3 H9 L12 12" /></svg>
            GTKWave<svg width="8" height="5"><path d="M0 0 H8 L4 5 Z" fill="#eee" /></svg>
          </button>
        </div>
        <div className="flex items-center gap-[11px] pl-20"><time>Nov 17&nbsp; 10:41</time><i className="size-[7px] rounded-full bg-white" /></div>
        <div className="flex items-center justify-end gap-[9px] pr-3">
          <svg width="14" height="13" viewBox="0 0 14 13" fill="#fff"><path d="M5 0 H9 V4 H5 Z M0 8 H4 V12 H0 Z M10 8 H14 V12 H10 Z" /><path d="M7 4 V6 M2 8 V6 H12 V8" stroke="#fff" fill="none" /></svg>
          <Speaker w={15} fill="#fff" />
          <svg width="13" height="13" viewBox="0 0 13 13" fill="none" stroke="#fff" strokeWidth="1.2"><path d="M3.5 2.5 A5.5 5.5 0 1 0 9.5 2.5 M6.5 0 V6.5" /></svg>
          <svg width="8" height="5"><path d="M0 0 H8 L4 5 Z" fill="#eee" /></svg>
        </div>
      </div>
      <div className="flex">
        <Dock />
        <GtkWave />
      </div>
      <div className="flex h-[27px] items-center justify-end border-b border-[#8a8a8a] bg-[#f0f0f0]">
        <div className="flex w-[211px] justify-between">
          {status.map((s, i) => <svg key={i} width="16" height="18" viewBox="0 0 16 18">{s}</svg>)}
        </div>
        <span className="ml-[3px] whitespace-nowrap font-['Liberation_Serif',serif] text-xs text-black">Right Ctrl</span>
      </div>
    </div>
  );
}

function RemoteTaskbar() {
  return (
    <div className="flex h-[50px] items-center bg-[#202020] text-white">
      <button aria-label="Start" className="ml-[22px]"><svg width="25" height="25" viewBox="0 0 25 25"><path d="M0 0 H12 V12 H0 Z M13 0 H25 V12 H13 Z M0 13 H12 V25 H0 Z M13 13 H25 V25 H13 Z" fill="#45bdf8" /></svg></button>
      <label className="ml-[14px] flex h-[33px] w-[231px] items-center gap-[11px] rounded-full bg-[#373737] pl-3">
        <Search w={16} c="#ddd" />
        <input aria-label="搜尋" placeholder="搜尋" className="w-40 bg-transparent font-['Noto_Sans_CJK_TC',sans-serif] text-lg font-light placeholder:text-[#ccc]" />
      </label>
      <div className="ml-3 flex items-center gap-5">
        <button aria-label="Explorer"><Folder w={27} /></button>
        <button aria-label="Edge"><Edge w={27} /></button>
        <button aria-label="Chrome"><Chrome w={26} /></button>
        <button aria-label="VirtualBox" className="relative"><svg width="24" height="26" viewBox="0 0 24 26"><path d="M12 1 L22 5 L20 17 L12 25 L4 17 L2 5 Z" fill="#16305f" stroke="#9fb4d8" strokeWidth="1.5" /><path d="M12 12 L5 7 V16 L12 22 Z" fill="#3f68a8" /><path d="M12 12 L19 7 V16 L12 22 Z" fill="#25457e" /><path d="M5 7 L12 12 L19 7 M12 12 V23" stroke="#dfe8f8" strokeWidth="1.5" fill="none" /></svg><i className="absolute -bottom-[7px] left-[9px] h-[3px] w-[6px] rounded bg-[#999]" /></button>
        <button aria-label="Vitis" className="relative -ml-[5px] flex size-[42px] items-center justify-center rounded bg-[#303030]"><Vitis w={26} /><i className="absolute bottom-0 left-3 h-[3px] w-[17px] rounded bg-[#5ec8f8]" /></button>
      </div>
      <div className="ml-auto flex items-center pr-5">
        <Chev up c="#fff" w={14} />
        <svg width="14" height="14" viewBox="0 0 14 14" className="ml-[9px]"><path d="M2 1 H7 V4 H5 L7 7 L5 10 H8 V13 H2 L0 10 L3 7 L0 4 Z M9 1 H13 L11 5 Z M9 13 H13 L11 9 Z" fill="#e0142c" /></svg>
        <span className="ml-4 font-['Noto_Sans_CJK_TC',sans-serif] text-base">英</span>
        <svg width="18" height="18" viewBox="0 0 18 18" fill="none" stroke="#fff" strokeWidth="1.3" className="ml-[17px]"><path d="M11 2 H1 V13 H17 M5 16.5 H13 M7 13 V16 M14 6 V16" /><rect x="12" y="1" width="4" height="5" /></svg>
        <span className="ml-[7px]"><Speaker w={17} /></span>
        <time className="ml-3 whitespace-nowrap text-right font-['Roboto','Noto_Sans_CJK_TC',sans-serif] text-xs leading-[17px]">下午 11:41<br />2024/11/17</time>
        <span className="ml-[7px] flex size-[17px] items-center justify-center rounded-full bg-[#5ec8f8] text-[11px] leading-none text-black">5</span>
      </div>
    </div>
  );
}

/* ---------- Local taskbar ---------- */
const SearchArt = () => (
  <svg width="118" height="56" viewBox="0 0 118 56">
    <path d="M18 38 H104 L118 51 H0 Z" fill="#e5bd92" /><path d="M0 51 H118 V56 H0 Z" fill="#b98a63" />
    <path d="M16 20 L50 11 L57 40 L24 50 Z" fill="#3a9c4c" /><path d="M17 17 L34 14 L41 43 L24 47 Z" fill="#fff" stroke="#b8b8c8" /><path d="M34 14 L50 10 L57 38 L41 43 Z" fill="#f5f5fb" stroke="#b8b8c8" />
    <path d="M22 22 L31 20 M23 27 L33 25 M25 32 L34 30 M38 19 L47 17 M40 25 L48 23 M41 30 L50 28" stroke="#8d8da8" />
    <path d="M46 24 L56 6 L61 9 L51 27 L46 29 Z" fill="#f7a32c" /><path d="M56 6 L58 2 L63 5 L61 9 Z" fill="#ef5350" />
    <path d="M79 7 Q88 -4 96 7" stroke="#1466c8" strokeWidth="3" fill="none" />
    <path d="M74 17 Q75 4 88 4 Q101 4 102 17 V43 Q102 47 98 47 H78 Q74 47 74 43 Z" fill="#1c8cf4" /><path d="M77 26 H99 V38 Q88 42 77 38 Z" fill="#0e6ce0" /><path d="M78 38 Q88 42 98 38 V44 H78 Z" fill="#b08cf4" /><path d="M80 15 H96" stroke="#7cc6ff" strokeWidth="2" />
  </svg>
);
const apps = [
  ["Copilot", <svg width="36" height="36" viewBox="0 0 36 36"><defs><linearGradient id="cp1" x1="0" x2="0" y1="0" y2="1"><stop offset="0" stopColor="#1aa0f0" /><stop offset="0.6" stopColor="#4fc85a" /><stop offset="1" stopColor="#f5c21a" /></linearGradient><linearGradient id="cp2" x1="1" x2="0" y1="0" y2="1"><stop offset="0" stopColor="#a46cf4" /><stop offset="0.5" stopColor="#f0549c" /><stop offset="1" stopColor="#ff9a4a" /></linearGradient></defs><path d="M11 2 H20 Q24 2 23 6 L17 24 Q15 29 10 28 H5 Q0 27 2 21 L7 6 Q8 2 11 2 Z" fill="url(#cp1)" /><path d="M20 2 H23 Q26 3 27 8 H19 Z" fill="#1450c8" /><path d="M25 34 H16 Q12 34 13 30 L19 12 Q21 8 26 8 H31 Q36 9 34 15 L29 30 Q28 34 25 34 Z" fill="url(#cp2)" /></svg>, 0],
  ["Edge", <Edge w={36} />, 0],
  ["Chrome", <Chrome w={38} avatar />, 1],
  ["Explorer", <Folder w={34} />, 1],
  ["TeamViewer", <TeamViewer w={36} />, 1],
  ["Calculator", <svg width="28" height="36" viewBox="0 0 28 36"><rect width="28" height="36" rx="2" fill="#6d7a86" /><rect x="3" y="3" width="22" height="6" fill="#4cc8f4" /><path d="M3 12 H8 V17 H3 Z M11 12 H16 V17 H11 Z M19 12 H24 V17 H19 Z M3 20 H8 V25 H3 Z M11 20 H16 V25 H11 Z M3 28 H8 V33 H3 Z M11 28 H16 V33 H11 Z" fill="#dfe5ea" /><path d="M19 20 H24 V33 H19 Z" fill="#164e94" /></svg>, 1],
  ["LINE", <svg width="36" height="36" viewBox="0 0 36 36"><rect width="36" height="36" rx="4" fill="#00b900" /><path d="M18 5 C27 5 32 10 32 16 C32 23 24 27 19 32 Q17 33 18 28 C9 28 4 23 4 16 C4 10 9 5 18 5 Z" fill="#fff" /><text x="18" y="19" textAnchor="middle" fill="#00b900" className="font-['Roboto',sans-serif] text-[8px] font-bold">LINE</text></svg>, 1],
];
function LocalTaskbar() {
  return (
    <footer className="flex h-[60px] items-center bg-[#1f1f1f] text-white">
      <button aria-label="Start" className="flex w-[72px] justify-center"><svg width="25" height="25" viewBox="0 0 25 25" fill="#fff"><path d="M0 4 L11 2 V12 H0 Z M12 2 L25 0 V12 H12 Z M0 13 H11 V23 L0 21 Z M12 13 H25 V25 L12 23 Z" /></svg></button>
      <label className="flex h-[60px] w-[432px] items-center border-2 border-[#bdbdbd] bg-[#f2f2f2] pl-[17px]">
        <Search w={25} c="#111" />
        <input aria-label="Search" placeholder="在這裡輸入文字來搜尋" className="ml-[17px] w-[251px] shrink-0 bg-transparent font-['Noto_Sans_CJK_TC',sans-serif] text-2xl font-light placeholder:text-[#222]" />
        <span className="shrink-0 self-end"><SearchArt /></span>
      </label>
      <div className="flex h-full bg-gradient-to-r from-[#343436] via-[#2e2e30] to-[#1f1f1f]">
        <button aria-label="Task View" className="flex h-full w-[75px] items-center justify-center"><svg width="25" height="24" viewBox="0 0 25 24" fill="none" stroke="#fff" strokeWidth="1.3"><path d="M1 1 V4 H17 V1 M1 23 V20 H17 V23 M1 7.5 H17 V16.5 H1 Z M23 0 V5 M23 12 V24" /><path d="M23 7 V11" strokeWidth="3" /></svg></button>
        {apps.map(([n, ic, run]) => (
          <button key={n} aria-label={n} className="relative flex h-[60px] w-[75px] items-center justify-center">
            {ic}
            {run === 1 && <i className="absolute bottom-0 left-[7px] h-[3px] w-[61px] bg-[#76b9ed]" />}
          </button>
        ))}
      </div>
      <div className="ml-auto flex items-center">
        <Chev up c="#fff" w={18} />
        <svg width="23" height="15" viewBox="0 0 23 15" fill="none" stroke="#fff" strokeWidth="1.3" className="ml-4"><rect x="0.7" y="1" width="20" height="12.5" /><rect x="2" y="3" width="6" height="9" fill="#fff" stroke="none" /><path d="M22 5 V10" /></svg>
        <span className="ml-3"><Speaker w={23} /></span>
        <svg width="19" height="19" viewBox="0 0 19 19" fill="none" stroke="#fff" strokeWidth="1.2" className="ml-4"><path d="M1 18 Q1 1 18 1" opacity="0.5" /><path d="M5 18 Q5 6 18 6 M9 18 Q9 10.5 18 10.5" /><path d="M13 18 Q13 14.5 18 14.5" /><circle cx="17" cy="17.5" r="1" fill="#fff" /></svg>
        <span className="ml-3 font-['Noto_Sans_CJK_TC',sans-serif] text-2xl">英</span>
        <span className="ml-5 flex size-[22px] items-center justify-center bg-white font-['Noto_Sans_CJK_TC',sans-serif] text-lg leading-none text-black">ㄅ</span>
        <time className="ml-5 whitespace-nowrap text-center font-['Roboto','Noto_Sans_CJK_TC',sans-serif] text-[19px] font-light leading-[27px]">下午 11:41<br />2024/11/17</time>
        <button aria-label="Notifications" className="relative ml-[22px] mr-[30px]">
          <svg width="25" height="24" viewBox="0 0 25 24"><path d="M0 0 H25 V18 H16 L11 23 V18 H0 Z" fill="#fff" /><path d="M5 5.5 H20 M5 9.5 H20 M5 13.5 H14" stroke="#222" strokeWidth="1.3" /></svg>
          <span className="absolute -bottom-[10px] left-3 flex size-6 items-center justify-center rounded-full border border-[#888] bg-[#333] text-base leading-none">2</span>
        </button>
        <i className="mr-[6px] h-[60px] w-px bg-[#777]" />
      </div>
    </footer>
  );
}

export default function App() {
  return (
    <div className={`flex min-h-screen flex-col bg-[#1a1a1a] ${UI}`}>
      <TitleBar />
      <TvToolbar />
      <main className="relative mx-[151px] flex flex-1 flex-col border-t border-black">
        <VmWindow />
        <RemoteTaskbar />
        <button aria-label="TeamViewer panel" className="absolute right-0 top-[751px] h-[54px] w-[25px]">
          <svg width="25" height="54" viewBox="0 0 25 54"><path d="M25 0 H4 Q0 0 0 4 V36 Q0 41 4 43 L25 54 Z" fill="#585858" /><rect x="6" y="8" width="17" height="17" rx="3" fill="#10123a" /><circle cx="14.5" cy="16.5" r="7" fill="#8a8a8a" /><path d="M9 16.5 L12 14 V16 H17 V14 L20 16.5 L17 19 V17 H12 V19 Z" fill="#10123a" /></svg>
        </button>
      </main>
      <LocalTaskbar />
    </div>
  );
}
